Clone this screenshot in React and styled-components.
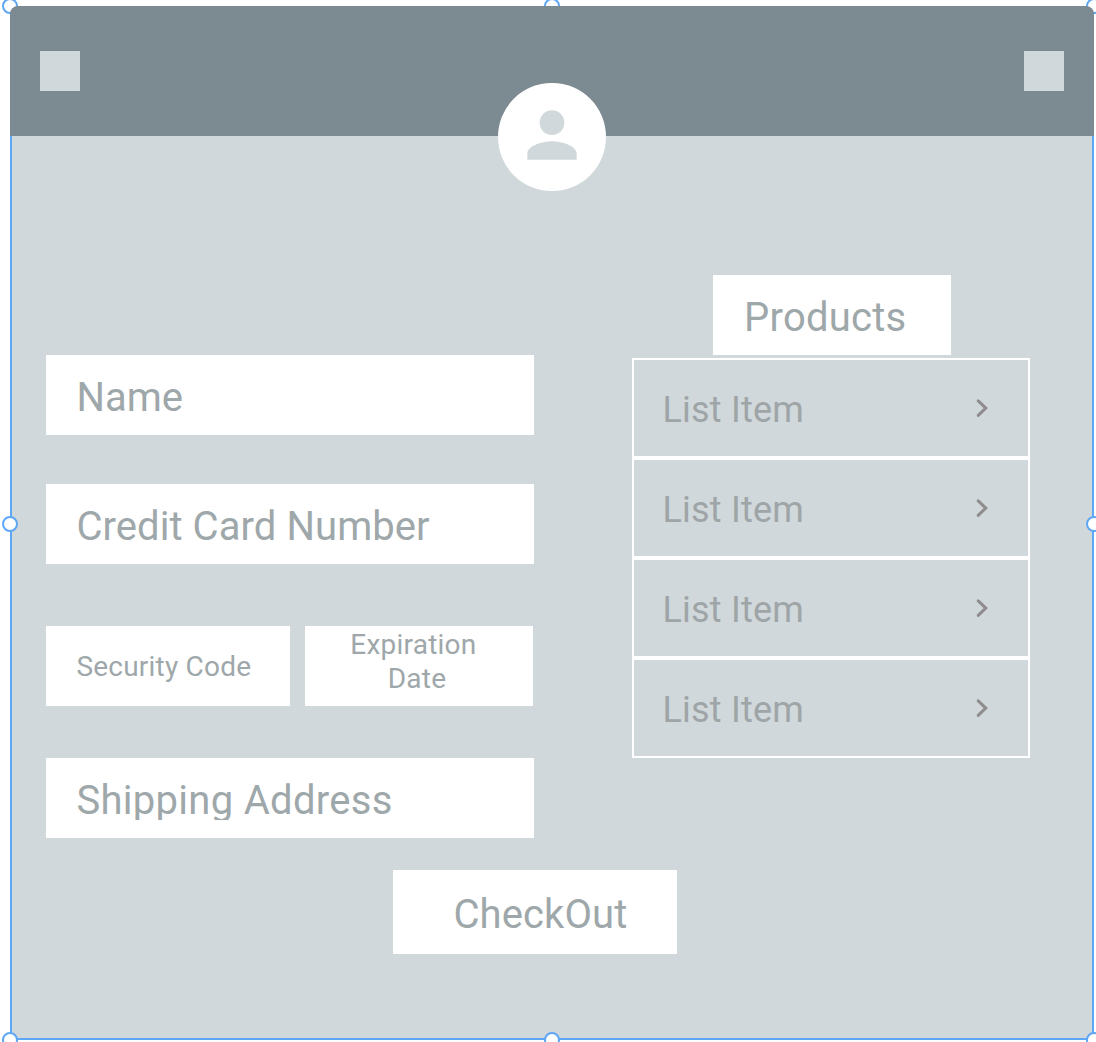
import React from "react";
import styled, { createGlobalStyle } from "styled-components";

const BLUE = "#5ea7f4";
const SLATE = "#7c8b91";
const MIST = "#d0d8db";
const INK = "#9ea7aa";

const GlobalStyle = createGlobalStyle`
  *, *::before, *::after { box-sizing: border-box; }
  body { margin: 0; background: #fff; }
`;

const Canvas = styled.div`
  width: 1096px;
  height: 1042px;
  padding: 6px 0 0 10px;
  overflow: hidden;
  background: #fff;
  font-family: Roboto, "Liberation Sans", sans-serif;
  color: ${INK};
`;

const Artboard = styled.div`
  position: relative;
  width: 1084px;
  height: 1034px;
  display: flex;
  flex-direction: column;
  background: ${MIST};
  box-shadow: inset 0 0 0 2px ${BLUE};
  border-radius: 8px 8px 0 0;
`;

const Handle = styled.span`
  position: absolute;
  left: ${(p) => p.$x};
  top: ${(p) => p.$y};
  width: 16px;
  height: 16px;
  margin: -8px 0 0 -8px;
  border: 2px solid ${BLUE};
  border-radius: 50%;
  background: #fff;
`;

const Header = styled.header`
  position: relative;
  z-index: 1;
  flex: none;
  height: 130px;
  padding: 0 30px;
  display: flex;
  align-items: center;
  justify-content: space-between;
  background: ${SLATE};
  border-radius: 8px 8px 0 0;
`;

const HeaderButton = styled.span`
  width: 40px;
  height: 40px;
  background: ${MIST};
`;

const Avatar = styled.div`
  position: absolute;
  left: 488px;
  top: 76.5px;
  width: 108px;
  height: 108.5px;
  display: flex;
  justify-content: center;
  padding-top: 15px;
  border-radius: 50%;
  background: #fff;
  svg { display: block; fill: ${MIST}; }
`;

const Content = styled.main`
  display: flex;
  justify-content: space-between;
  align-items: flex-start;
  padding: 139px 64px 0 36px;
`;

const Form = styled.div`
  width: 488px;
  padding-top: 80px;
  display: flex;
  flex-direction: column;
`;

const Field = styled.div`
  width: ${(p) => p.$w || "100%"};
  height: ${(p) => p.$h || 80}px;
  margin-top: ${(p) => p.$gap || 0}px;
  padding: 0 ${(p) => p.$pad || 30}px;
  display: flex;
  align-items: center;
  background: #fff;
`;

const FieldRow = styled.div`
  display: flex;
  gap: 15px;
  margin-top: 62px;
`;

const Label = styled.span`
  flex: 1;
  height: 40px;
  margin-top: 4px;
  padding-left: ${(p) => p.$indent || "0.4px"};
  font-size: 40px;
  line-height: 42px;
  letter-spacing: ${(p) => p.$ls || "0.25px"};
  white-space: nowrap;
  overflow-y: ${(p) => (p.$clip ? "clip" : "visible")};
`;

const SmallLabel = styled.span`
  flex: 1;
  font-size: 28px;
  line-height: 34px;
  letter-spacing: 0.22px;
  white-space: pre;
  text-align: ${(p) => p.$align || "left"};
  padding: ${(p) => p.$inset || "0"};
`;

const Products = styled.section`
  width: 398px;
  display: flex;
  flex-direction: column;
`;

const ProductsTitle = styled(Field)`
  width: 238px;
  margin-left: 81px;
`;

const List = styled.ul`
  list-style: none;
  margin: 3px 0 0;
  padding: 0;
`;

const Item = styled.li`
  height: 100px;
  padding: 0 39px 0 28px;
  border: 2px solid #fff;
  display: flex;
  align-items: center;
  justify-content: space-between;
  font-size: 36px;
  line-height: 36px;
  letter-spacing: 0.2px;
  color: #9fa5a7;
  svg { display: block; }
`;

const ItemText = styled.span`
  padding: 3px 0 0 0.5px;
`;

const Footer = styled.footer`
  display: flex;
  padding: 32px 0 0 383px;
`;

const handles = [
  ["0px", "0px"],
  ["50%", "0px"],
  ["100%", "0px"],
  ["0px", "518px"],
  ["100%", "518px"],
  ["0px", "100%"],
  ["50%", "100%"],
  ["100%", "100%"],
];

const Chevron = () => (
  <svg width="14" height="20" viewBox="0 0 14 20" fill="none" stroke="#8f8c8d" strokeWidth="3" strokeLinecap="round">
    <path d="M3.2 2.8 10.8 10.1 3.2 17.4" />
  </svg>
);

const items = ["List Item", "List Item", "List Item", "List Item"];

export default function App() {
  return (
    <Canvas>
      <GlobalStyle />
      <Artboard>
        <Header>
          <HeaderButton />
          <Avatar>
            <svg width="74" height="74" viewBox="0 0 24 24">
              <path d="M12 12c2.21 0 4-1.79 4-4s-1.79-4-4-4-4 1.79-4 4 1.79 4 4 4zm0 2c-2.67 0-8 1.34-8 4v2h16v-2c0-2.66-5.33-4-8-4z" />
            </svg>
          </Avatar>
          <HeaderButton />
        </Header>
        <Content>
          <Form>
            <Field><Label $ls="0px">Name</Label></Field>
            <Field $gap={49}><Label $ls="0.07px">Credit Card Number</Label></Field>
            <FieldRow>
              <Field $w="244px"><SmallLabel $inset="2px 0 0 0.4px">Security Code</SmallLabel></Field>
              <Field $w="228px">
                <SmallLabel $align="center" $inset="0 4px 8px 0">{"Expiration \nDate"}</SmallLabel>
              </Field>
            </FieldRow>
            <Field $gap={52}><Label $clip $ls="0.3px">Shipping Address</Label></Field>
          </Form>
          <Products>
            <ProductsTitle>
              <Label $indent="1px">Products</Label>
            </ProductsTitle>
            <List>
              {items.map((text, i) => (
                <Item key={i}>
                  <ItemText>{text}</ItemText>
                  <Chevron />
                </Item>
              ))}
            </List>
          </Products>
        </Content>
        <Footer>
          <Field $w="284px" $h={84} $pad={60}><Label $ls="0.1px">CheckOut</Label></Field>
        </Footer>
        {handles.map(([x, y]) => (
          <Handle key={x + y} $x={x} $y={y} />
        ))}
      </Artboard>
    </Canvas>
  );
}
